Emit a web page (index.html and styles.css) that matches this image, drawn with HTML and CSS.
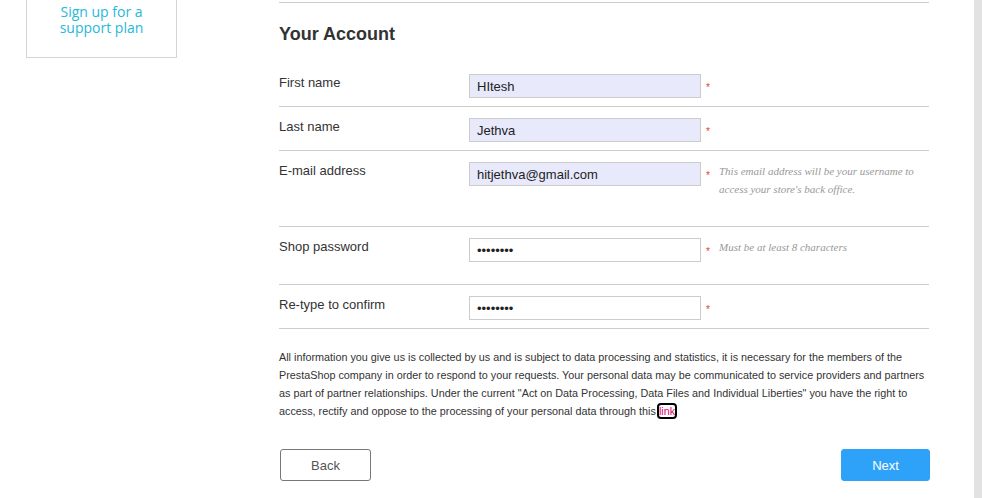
FILE: index.html
```html
<!DOCTYPE html>
<html>
<head>
<meta charset="utf-8">
<link rel="stylesheet" href="styles.css">
</head>
<body>
<div class="page">
  <aside class="sidebar">
    <div class="support-box"><span class="support-line">Sign up for a</span><span class="support-line">support plan</span></div>
  </aside>
  <main class="main">
    <h2 class="title">Your Account</h2>
    <div class="row">
      <label class="label">First name</label>
      <div class="field"><input class="input filled" type="text" value="HItesh"></div>
      <span class="req">*</span>
    </div>
    <div class="row">
      <label class="label">Last name</label>
      <div class="field"><input class="input filled" type="text" value="Jethva"></div>
      <span class="req">*</span>
    </div>
    <div class="row">
      <label class="label">E-mail address</label>
      <div class="field"><input class="input filled" type="text" value="hitjethva@gmail.com"></div>
      <span class="req">*</span>
      <p class="hint">This email address will be your username to access your store's back office.</p>
    </div>
    <div class="row">
      <label class="label">Shop password</label>
      <div class="field"><input class="input" type="password" value="12345678"></div>
      <span class="req">*</span>
      <p class="hint">Must be at least 8 characters</p>
    </div>
    <div class="row">
      <label class="label">Re-type to confirm</label>
      <div class="field"><input class="input" type="password" value="12345678"></div>
      <span class="req">*</span>
    </div>
    <p class="legal">All information you give us is collected by us and is subject to data processing and statistics, it is necessary for the members of the PrestaShop company in order to respond to your requests. Your personal data may be communicated to service providers and partners as part of partner relationships. Under the current "Act on Data Processing, Data Files and Individual Liberties" you have the right to access, rectify and oppose to the processing of your personal data through this <a class="link" href="#">link</a></p>
    <div class="actions">
      <button class="btn btn-back">Back</button>
      <button class="btn btn-next">Next</button>
    </div>
  </main>
  <div class="scroll-track"></div>
</div>
</body>
</html>
```
FILE: styles.css
```css
html, body {
  margin: 0;
  padding: 0;
  background: #fff;
}
body {
  font-family: "Liberation Sans", Arial, sans-serif;
  color: #333;
  overflow: hidden;
}
.page {
  display: flex;
  height: 498px;
}
.sidebar {
  width: 279px;
  flex: none;
  padding-left: 26px;
  box-sizing: border-box;
}
.support-box {
  width: 151px;
  box-sizing: border-box;
  border: 1px solid #d5d5d5;
  border-top: none;
  padding: 4px 0 21px;
  text-align: center;
  font-family: "Open Sans", sans-serif;
  font-size: 14px;
  line-height: 16px;
  color: #25b9d7;
}
.support-line {
  display: block;
}
.main {
  width: 650px;
  flex: none;
  margin-top: 2px;
  border-top: 1px solid #ccc;
  align-self: flex-start;
}
.title {
  margin: 21px 0 18px;
  font-size: 18px;
  line-height: 21px;
  font-weight: bold;
  color: #333;
}
.row {
  display: flex;
  align-items: flex-start;
  padding: 11px 0 8px;
  border-bottom: 1px solid #ccc;
}
.label {
  width: 190px;
  flex: none;
  margin-top: 1px;
  font-size: 13px;
  line-height: 16px;
  color: #333;
}
.field {
  width: 232px;
  flex: none;
}
.input {
  display: block;
  width: 232px;
  height: 24px;
  box-sizing: border-box;
  margin: 0;
  border: 1px solid #ccc;
  padding: 0 7px;
  font-family: "Liberation Sans", Arial, sans-serif;
  font-size: 13px;
  color: #222;
  background: #fff;
  outline: none;
}
.input.filled {
  background: #e8eafc;
}
.req {
  width: 18px;
  flex: none;
  padding-left: 5px;
  box-sizing: border-box;
  color: #e04040;
  font-size: 10px;
  line-height: 10px;
  margin-top: 9px;
}
.hint {
  margin: 0 0 20px;
  width: 200px;
  font-family: "Liberation Serif", "Times New Roman", serif;
  font-style: italic;
  font-size: 11px;
  line-height: 18px;
  color: #999;
}
.legal {
  margin: 19px 0 0;
  font-size: 10.8px;
  line-height: 18px;
  color: #333;
}
.link {
  color: #df0067;
  text-decoration: none;
  outline: 2px solid #000;
  border-radius: 2px;
}
.actions {
  display: flex;
  justify-content: space-between;
  margin-top: 29px;
}
.btn {
  height: 32px;
  box-sizing: border-box;
  border-radius: 3px;
  font-family: "Liberation Sans", Arial, sans-serif;
  font-size: 13px;
  cursor: pointer;
}
.btn-back {
  width: 91px;
  margin-left: 1px;
  background: #fff;
  border: 1px solid #777;
  color: #555;
}
.btn-next {
  width: 89px;
  margin-right: -1px;
  background: #2ea2f8;
  border: 1px solid #2ea2f8;
  color: #fff;
}
.scroll-track {
  margin-left: auto;
  width: 8px;
  height: 498px;
  background: #e2e2e2;
}
```
